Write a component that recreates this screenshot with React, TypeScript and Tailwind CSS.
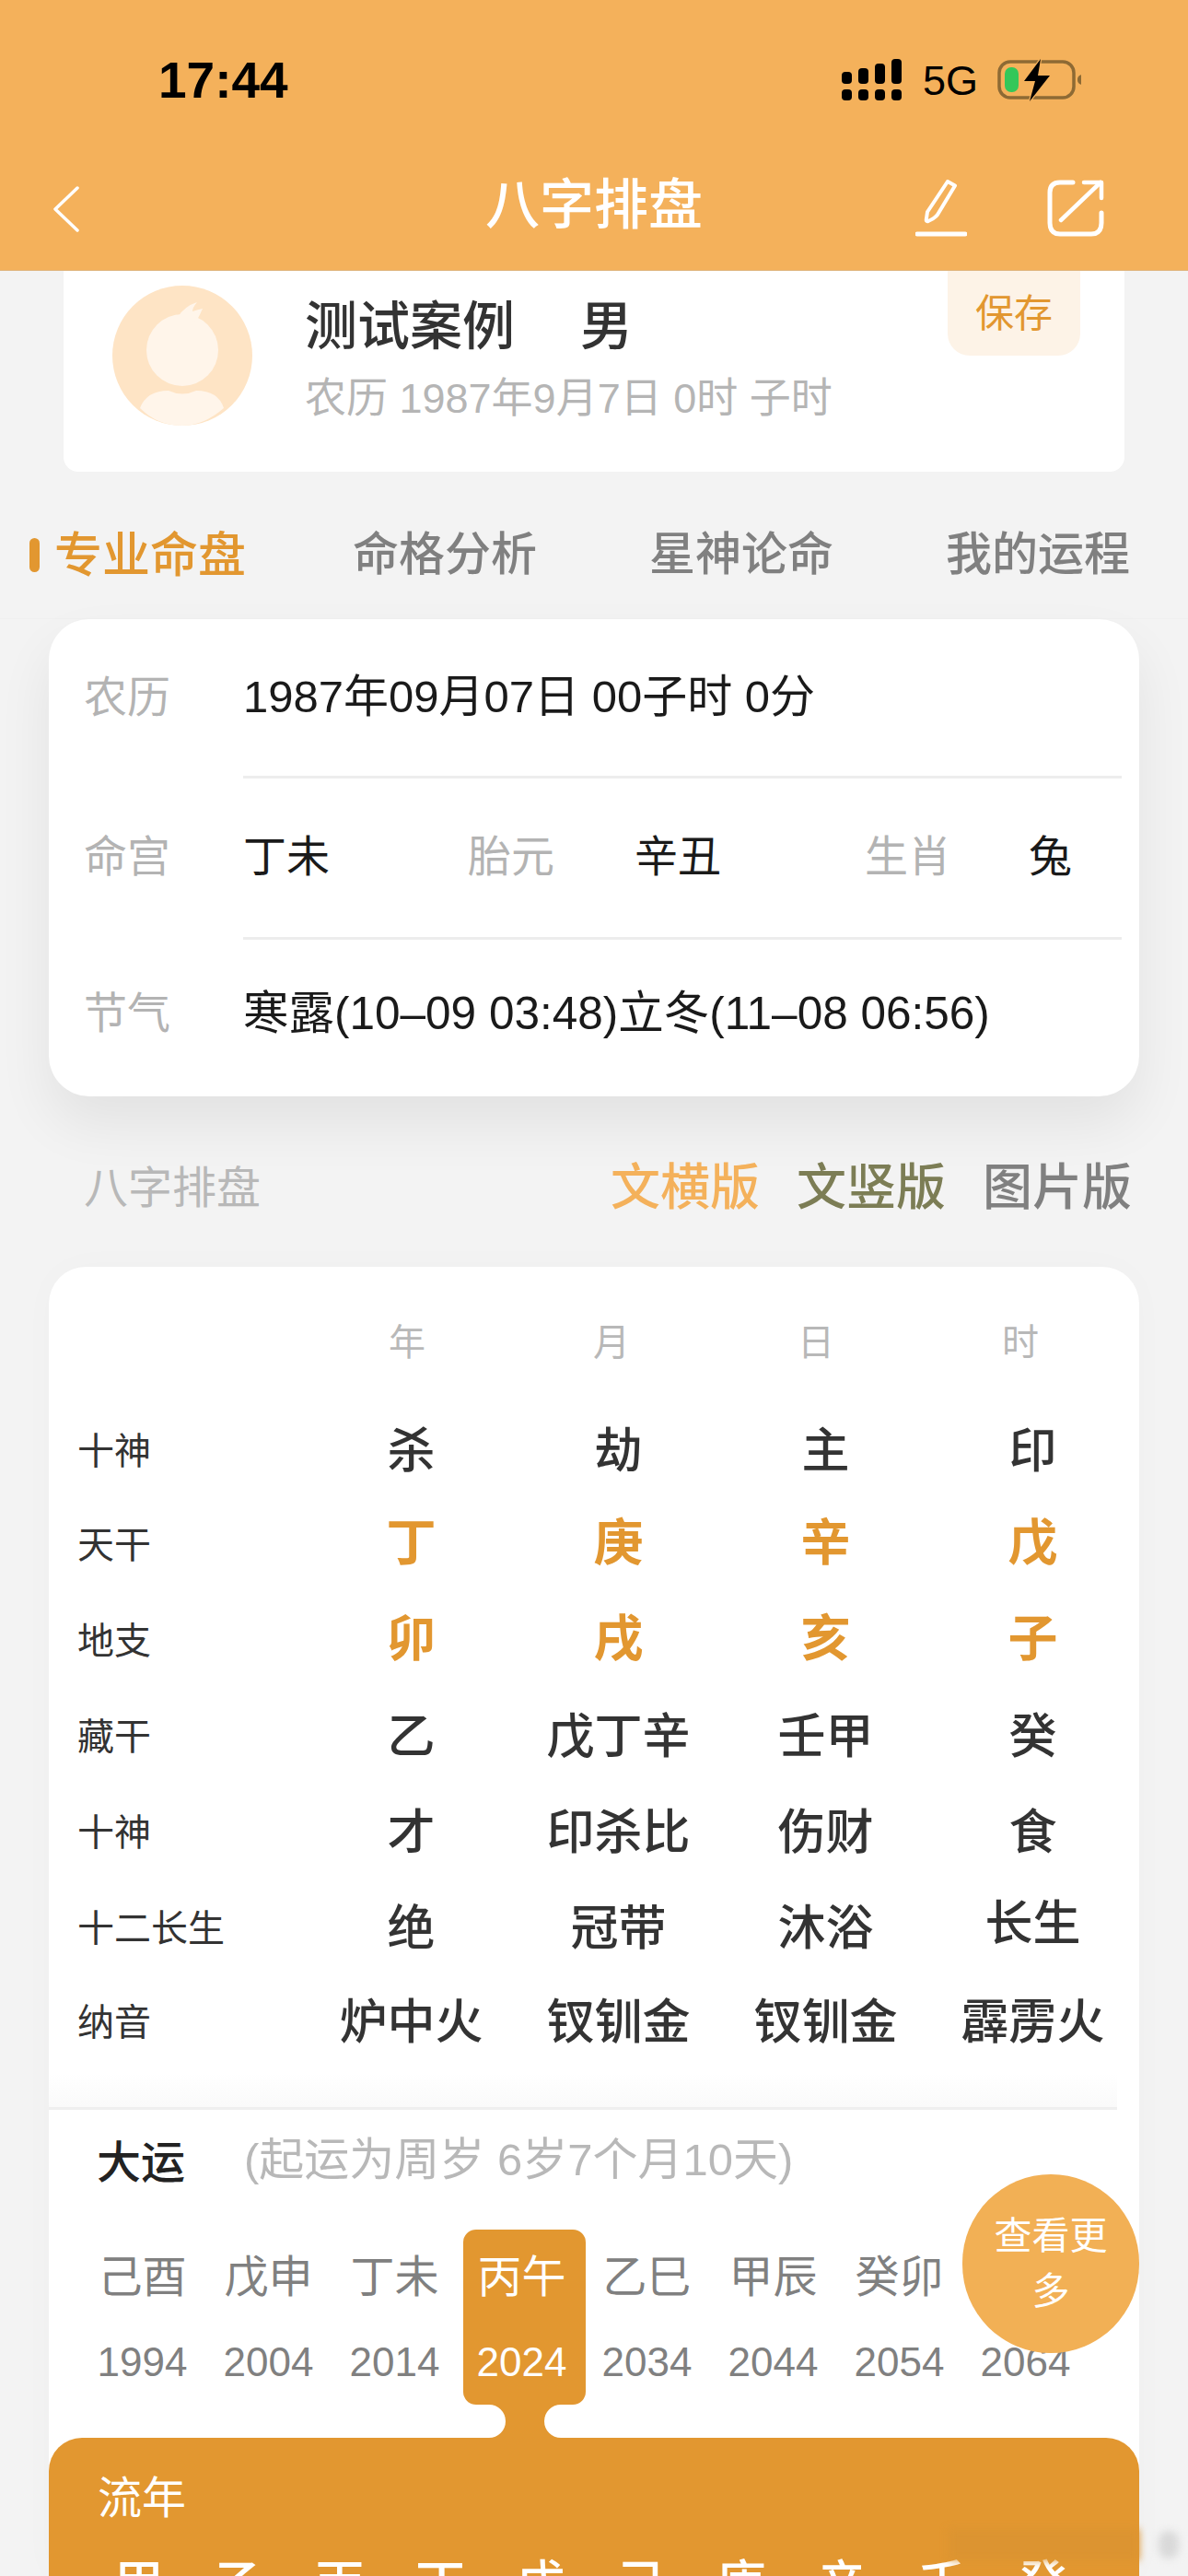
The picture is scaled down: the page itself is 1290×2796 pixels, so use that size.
import React from 'react';

const tabs = ['命格分析', '星神论命', '我的运程'];

const rows = [
  { label: '十神', cells: ['杀', '劫', '主', '印'], h: 'h-[100px]' },
  { label: '天干', cells: ['丁', '庚', '辛', '戊'], h: 'h-[104px]', hot: true },
  { label: '地支', cells: ['卯', '戌', '亥', '子'], h: 'h-[104px]', hot: true },
  { label: '藏干', cells: ['乙', '戊丁辛', '壬甲', '癸'], h: 'h-[104px]' },
  { label: '十神', cells: ['才', '印杀比', '伤财', '食'], h: 'h-[104px]' },
  { label: '十二长生', cells: ['绝', '冠带', '沐浴', '长生'], h: 'h-[104px]' },
  { label: '纳音', cells: ['炉中火', '钗钏金', '钗钏金', '霹雳火'], h: 'h-[100px]' },
];

const dayun = [
  ['己酉', '1994'],
  ['戊申', '2004'],
  ['丁未', '2014'],
  ['丙午', '2024'],
  ['乙巳', '2034'],
  ['甲辰', '2044'],
  ['癸卯', '2054'],
  ['', '2064'],
];

const liunian = ['甲', '乙', '丙', '丁', '戊', '己', '庚', '辛', '壬', '癸'];

const StatusIcons = () => (
  <div className="flex items-center">
    <svg width="66" height="46" viewBox="0 0 66 46" fill="#000">
      <rect x="0" y="14" width="11" height="13" rx="4" />
      <rect x="18" y="10" width="11" height="17" rx="4" />
      <rect x="36" y="5" width="11" height="22" rx="4" />
      <rect x="54" y="0" width="11" height="27" rx="4" />
      <rect x="0" y="33" width="11" height="12" rx="4" />
      <rect x="18" y="33" width="11" height="12" rx="4" />
      <rect x="36" y="33" width="11" height="12" rx="4" />
      <rect x="54" y="33" width="11" height="12" rx="4" />
    </svg>
    <span className="ml-[22px] text-[45px] leading-none text-black">5G</span>
    <svg className="ml-[21px]" width="94" height="46" viewBox="0 0 94 46">
      <rect x="2" y="3" width="81" height="39" rx="12" fill="none" stroke="#8d6a34" strokeWidth="3.5" />
      <rect x="8" y="9" width="15" height="27" rx="7" fill="#34c759" />
      <path d="M94 17v11c-2-1-4-2-4-5.500s2-4.500 4-5.500z" fill="#8d6a34" transform="translate(-3 0)" />
      <path d="M47 0 L29 24 H41 L35 46 L57 18 H44 Z" fill="#000" stroke="#f4b15b" strokeWidth="2.500" paintOrder="stroke" />
    </svg>
  </div>
);

const BackIcon = () => (
  <svg className="mt-[8px]" width="30" height="50" viewBox="0 0 30 50" fill="none" stroke="#fff" strokeWidth="3.5" strokeLinecap="round" strokeLinejoin="round">
    <path d="M27 2 L3 25 L27 48" />
  </svg>
);

const PencilIcon = () => (
  <svg width="56" height="62" viewBox="0 0 56 62" fill="none" stroke="#fff" strokeLinecap="round" strokeLinejoin="round">
    <path d="M35 2 L43 6.500 L24 38 Q21 42 14 45 Q11 46 12 42 L13 35 Z" strokeWidth="4" />
    <path d="M2 59 H54" strokeWidth="5" />
  </svg>
);

const ShareIcon = () => (
  <svg width="62" height="62" viewBox="0 0 62 62" fill="none" stroke="#fff" strokeLinecap="round" strokeLinejoin="round" strokeWidth="5">
    <path d="M28 3 H14 Q3 3 3 14 V47 Q3 59 14 59 H48 Q59 59 59 47 V36" />
    <path d="M15 44 L58 3" strokeWidth="4.500" />
    <path d="M40 3 H59 V20" strokeWidth="4.500" />
  </svg>
);

const Avatar = () => (
  <svg width="154" height="154" viewBox="0 0 154 154">
    <circle cx="77" cy="77" r="76" fill="#fee4c5" />
    <circle cx="77" cy="71" r="39" fill="#fff5ea" />
    <path d="M72 35 Q80 23 93 19 Q88 25 88 29 Q94 27 99 26 Q96 33 92 40 Z" fill="#fff5ea" />
    <path d="M31 134 Q38 115 62 115 Q77 122 92 115 Q116 115 122 134 Q100 153 77 153 Q50 153 31 134 Z" fill="#fff5ea" />
  </svg>
);

const App: React.FC = () => {
  return (
    <div className="h-[2796px] w-[1290px] overflow-hidden bg-[#f3f3f3] [font-family:'Liberation_Sans','Noto_Sans_CJK_SC',sans-serif]">
      {/* Orange header */}
      <header className="h-[294px] border-b border-[#dfb47c] bg-[#f4b15b]">
        <div className="flex h-[189px] items-start justify-between pl-[172px] pr-[113px] pt-[64px]">
          <span className="text-[55px] font-bold leading-[46px] text-black">17:44</span>
          <StatusIcons />
        </div>
        <div className="grid grid-cols-[1fr_auto_1fr] items-center px-[57px]">
          <BackIcon />
          <h1 className="text-[59px] font-medium leading-[50px] text-white">八字排盘</h1>
          <div className="mr-[34px] mt-[6px] flex items-center justify-end gap-[87px]">
            <PencilIcon />
            <ShareIcon />
          </div>
        </div>
      </header>

      {/* Person card */}
      <section className="mx-[69px] flex h-[218px] items-start rounded-b-[16px] bg-white pl-[52px] pr-[48px]">
        <div className="mt-[15px]">
          <Avatar />
        </div>
        <div className="ml-[56px] mt-[26px] flex-1">
          <div className="text-[57px] font-medium leading-[68px] text-[#333333]">
            测试案例<span className="ml-[71px]">男</span>
          </div>
          <div className="mt-[17px] text-[45px] leading-[56px] text-[#b5b5b5]">农历 1987年9月7日 0时 子时</div>
        </div>
        <div className="flex h-[92px] w-[144px] items-center justify-center rounded-b-[24px] bg-[#fdf3e7] text-[42px] text-[#e29730]">
          保存
        </div>
      </section>

      {/* Tabs */}
      <nav className="flex h-[160px] items-center justify-between border-b border-[#f0f0f0] pl-[32px] pr-[63px] pt-[22px]">
        <div className="-mr-[6px] flex items-center">
          <span className="h-[37px] w-[11px] rounded-full bg-[#e29730]" />
          <span className="ml-[16px] text-[52px] font-medium text-[#e29730]">专业命盘</span>
        </div>
        {tabs.map((tab) => (
          <span key={tab} className="text-[50px] font-medium text-[#808080]">
            {tab}
          </span>
        ))}
      </nav>

      {/* Info card */}
      <section className="mx-[53px] h-[518px] rounded-[44px] bg-white pl-[38px] pr-[19px] shadow-[0_30px_60px_rgba(0,0,0,0.07)]">
        <div className="flex h-[170px] items-center">
          <span className="w-[173px] text-[47px] text-[#b3b3b3]">农历</span>
          <span className="text-[49px] text-[#1a1a1a]">1987年09月07日 00子时 0分</span>
        </div>
        <div className="ml-[173px] h-[3px] bg-[#ededed]" />
        <div className="flex h-[172px] items-center pb-[2px]">
          <span className="w-[173px] text-[47px] text-[#b3b3b3]">命宫</span>
          <span className="w-[244px] text-[47px] text-[#1a1a1a]">丁未</span>
          <span className="w-[181px] text-[47px] text-[#b3b3b3]">胎元</span>
          <span className="w-[250px] text-[47px] text-[#1a1a1a]">辛丑</span>
          <span className="w-[178px] text-[47px] text-[#b3b3b3]">生肖</span>
          <span className="text-[47px] text-[#1a1a1a]">兔</span>
        </div>
        <div className="ml-[173px] h-[3px] bg-[#ededed]" />
        <div className="flex h-[168px] items-center pb-[8px]">
          <span className="w-[173px] text-[47px] text-[#b3b3b3]">节气</span>
          <span className="text-[49.500px] text-[#1a1a1a]">寒露(10–09 03:48)立冬(11–08 06:56)</span>
        </div>
      </section>

      {/* Section title */}
      <div className="mx-[53px] flex h-[185px] items-center justify-between pl-[38px] pr-[8px] pt-[14px]">
        <span className="text-[48px] text-[#b8b8b8]">八字排盘</span>
        <div className="flex gap-[40px] text-[54px] font-medium">
          <span className="text-[#f4b15b]">文横版</span>
          <span className="text-[#7c7d55]">文竖版</span>
          <span className="text-[#808080]">图片版</span>
        </div>
      </div>

      {/* Bazi table card */}
      <section className="relative mx-[53px] h-[1421px] rounded-t-[40px] bg-white shadow-[0_0_40px_rgba(0,0,0,0.02)]">
        <div className="grid h-[150px] grid-cols-[250px_repeat(4,222px)] items-center pl-[28px] pt-[14px] text-center text-[40px] text-[#b8b8b8]">
          <span />
          <span>年</span>
          <span>月</span>
          <span>日</span>
          <span>时</span>
        </div>
        {rows.map((row, i) => (
          <div key={i} className={`grid grid-cols-[250px_repeat(4,225px)] items-center pl-[31px] ${row.h}`}>
            <span className="text-[40px] text-[#333333]">{row.label}</span>
            {row.cells.map((cell, j) => (
              <span
                key={j}
                className={
                  row.hot
                    ? '-mt-[3px] text-center text-[54px] font-semibold text-[#e29730]'
                    : cell === '长生'
                      ? '-mt-[10px] text-center text-[52px] font-medium text-[#333333]'
                      : 'text-center text-[52px] font-medium text-[#333333]'
                }
              >
                {cell}
              </span>
            ))}
          </div>
        ))}
        <div className="mr-[24px] mt-[5px] h-[37px] bg-linear-to-b from-white to-[#fafafa]" />
        <div className="mr-[24px] h-[3px] bg-[#efefef]" />

        {/* Dayun */}
        <div className="flex h-[130px] items-center pb-[14px] pl-[52px]">
          <span className="text-[48px] font-medium text-[#222222]">大运</span>
          <span className="-mt-[6px] ml-[64px] text-[49px] text-[#b8b8b8]">(起运为周岁 6岁7个月10天)</span>
        </div>
        <div className="flex pl-[33px]">
          {dayun.map(([gan, year]) => {
            const active = year === '2024';
            return (
              <div
                key={year}
                className={
                  active
                    ? 'relative -mr-[2px] ml-[6px] flex h-[190px] w-[133px] flex-col items-center rounded-[14px] bg-[#e29730] pr-[6px] pt-[17px] text-white'
                    : 'flex h-[190px] w-[137px] flex-col items-center pt-[17px] text-[#808080]'
                }
              >
                <span className="h-[69px] text-[48px] leading-[69px]">{gan}</span>
                <span className="mt-[30px] text-[44px] leading-[56px]">{year}</span>
                {active && (
                  <svg className="absolute left-[28px] top-[190px]" width="78" height="36" viewBox="0 0 78 36" fill="#e29730">
                    <path d="M0 0 H78 A18 18 0 0 0 60 18 A18 18 0 0 0 78 36 H0 A18 18 0 0 0 18 18 A18 18 0 0 0 0 0 Z" />
                  </svg>
                )}
              </div>
            );
          })}
        </div>

        {/* Floating button */}
        <div className="absolute left-[992px] top-[985px] flex h-[194px] w-[192px] items-center justify-center rounded-full bg-[#f2b055] px-[26px] text-center text-[41px] leading-[60px] text-white">
          查看更多
        </div>

        {/* Liunian */}
        <div className="mt-[36px] h-[150px] rounded-t-[36px] bg-[#e29730] pl-[53px] text-white">
          <div className="pt-[36px] text-[48px] leading-[60px]">流年</div>
          <div className="ml-[18px] mt-[28px] flex text-[54px] font-medium leading-[70px]">
            {liunian.map((gan) => (
              <span key={gan} className="w-[109px] shrink-0">
                {gan}
              </span>
            ))}
          </div>
        </div>

        {/* Blurred watermark in the corner */}
        <div className="absolute left-[977px] top-[1370px] h-[34px] w-[207px] bg-[#dc9431] blur-[4px]" />
        <div className="absolute left-[1205px] top-[1372px] h-[30px] w-[22px] rounded-full bg-[#d9d9d9] blur-[4px]" />
      </section>
    </div>
  );
};

export default App;
